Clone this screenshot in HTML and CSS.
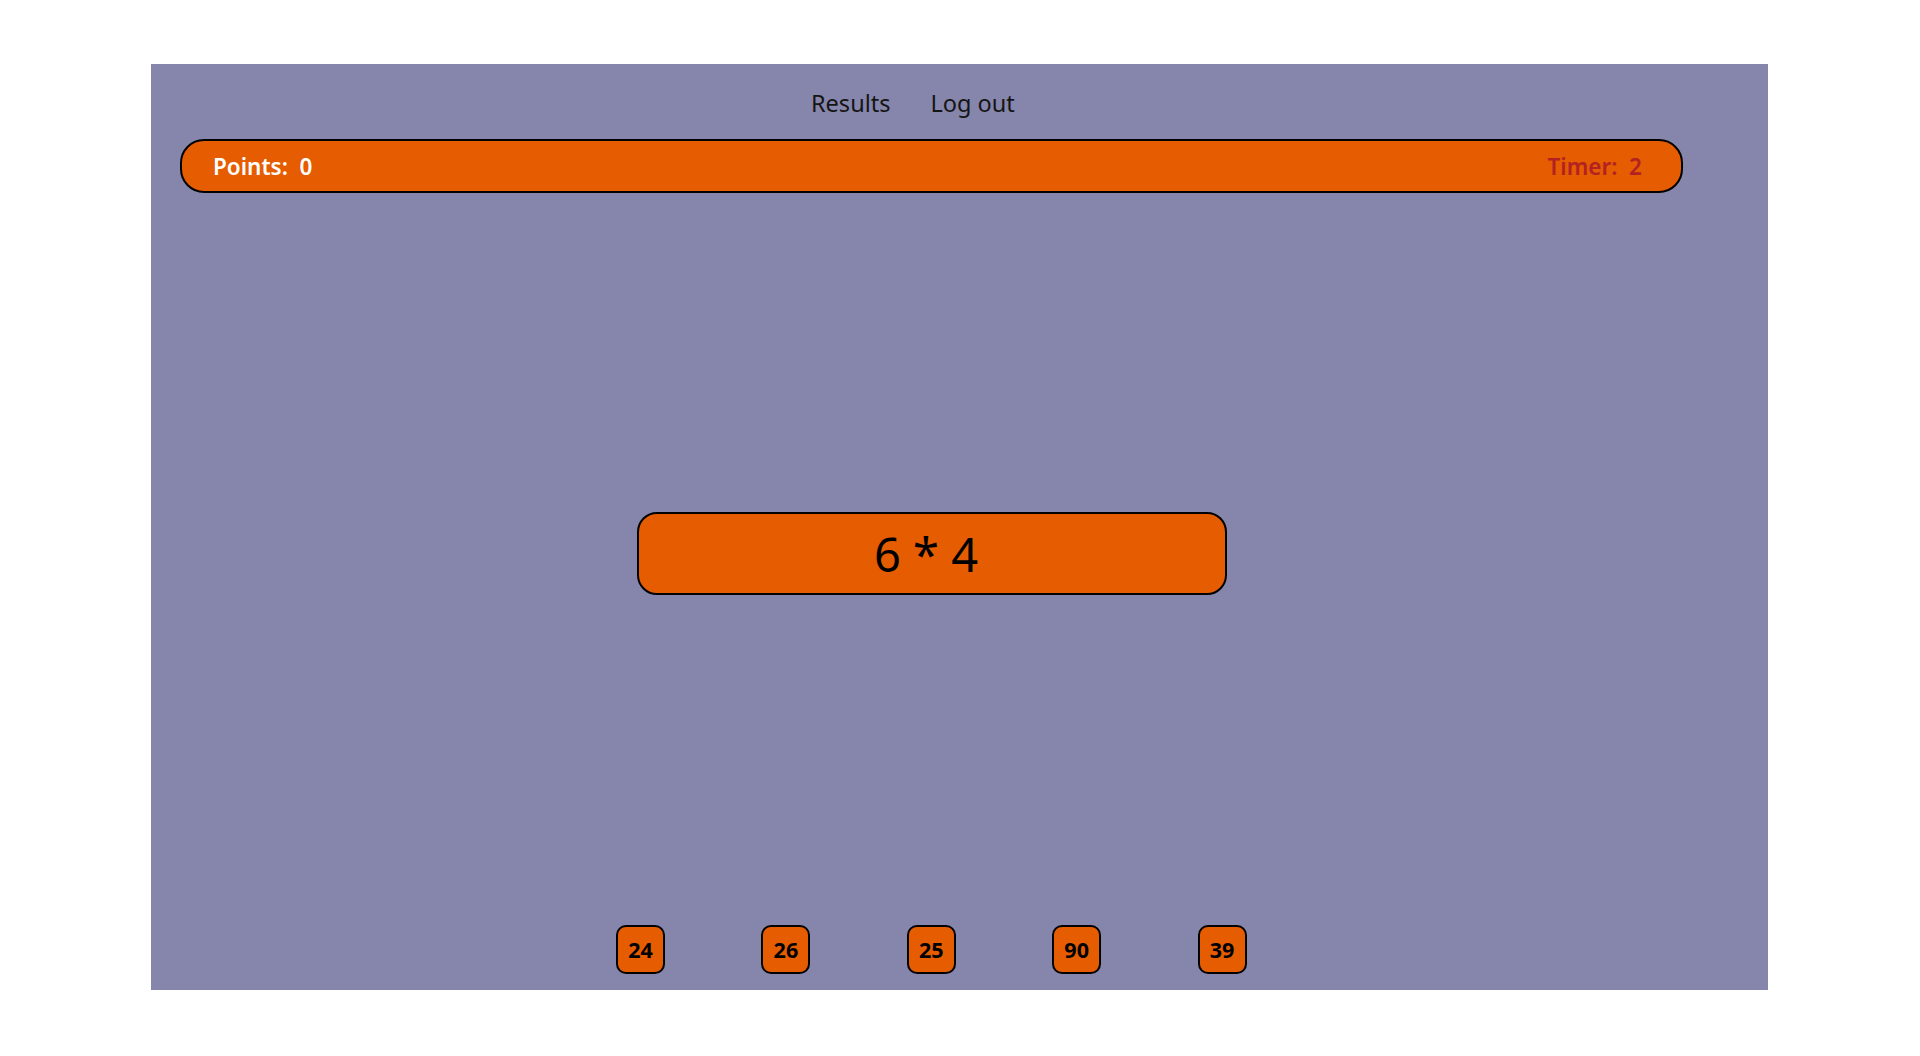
FILE: index.html
```html
<!DOCTYPE html>
<html>
<head>
<meta charset="utf-8">
<link rel="stylesheet" href="styles.css">
</head>
<body>
<div class="app">
  <nav class="nav">
    <a class="nav-link">Results</a>
    <a class="nav-link">Log out</a>
  </nav>
  <div class="status">
    <span class="points">Points:&nbsp; 0</span>
    <span class="timer">Timer:&nbsp; 2</span>
  </div>
  <div class="question">6 * 4</div>
  <div class="answers">
    <div class="answer">24</div>
    <div class="answer">26</div>
    <div class="answer">25</div>
    <div class="answer">90</div>
    <div class="answer">39</div>
  </div>
</div>
</body>
</html>
```
FILE: styles.css
```css
html, body {
  margin: 0;
  padding: 0;
  background: #ffffff;
}
body {
  font-family: "Noto Sans", "Open Sans", sans-serif;
}
.app {
  margin: 64px 152px 0 151px;
  background: #8685ab;
  padding: 23px 0 16px 29px;
  display: flex;
  flex-direction: column;
  align-items: flex-start;
}
.nav {
  display: flex;
  gap: 40px;
  margin-left: 631px;
  height: 32px;
  line-height: 32px;
  font-size: 23.5px;
}
.nav-link {
  color: #151515;
}
.status {
  margin-top: 20px;
  box-sizing: border-box;
  width: 1503px;
  height: 54px;
  border: 2px solid #000;
  border-radius: 24px;
  background: #e65c00;
  display: flex;
  align-items: center;
  justify-content: space-between;
  padding: 0 39px 0 31px;
  font-size: 22.5px;
  font-weight: 600;
}
.points {
  color: #ffffff;
}
.timer {
  color: #b22222;
}
.question {
  margin-top: 319px;
  margin-left: 457px;
  box-sizing: border-box;
  width: 590px;
  height: 83px;
  border: 2px solid #000;
  border-radius: 20px;
  background: #e65c00;
  display: flex;
  align-items: center;
  justify-content: center;
  padding-right: 12px;
  font-size: 47px;
  color: #000;
}
.answers {
  margin-top: 330px;
  margin-left: 436px;
  display: flex;
  gap: 96.4px;
}
.answer {
  box-sizing: border-box;
  width: 49px;
  height: 49px;
  border: 2px solid #000;
  border-radius: 10px;
  background: #e65c00;
  display: flex;
  align-items: center;
  justify-content: center;
  font-size: 21.5px;
  font-weight: 700;
  color: #000;
}
```
